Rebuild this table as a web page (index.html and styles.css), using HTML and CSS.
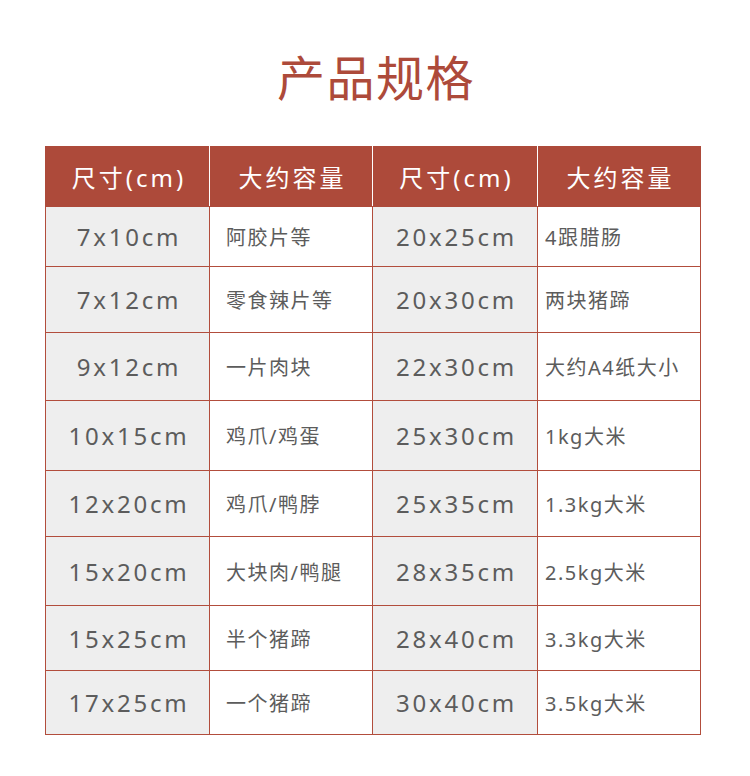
FILE: index.html
```html
<!DOCTYPE html>
<html lang="zh-CN">
<head>
<meta charset="utf-8">
<title>产品规格</title>
<link rel="stylesheet" href="styles.css">
</head>
<body>
<h1 class="title">产品规格</h1>
<table class="spec">
  <thead>
    <tr>
      <th>尺寸(cm)</th><th>大约容量</th><th>尺寸(cm)</th><th>大约容量</th>
    </tr>
  </thead>
  <tbody>
    <tr><td class="size">7x10cm</td><td class="cap cap-a">阿胶片等</td><td class="size">20x25cm</td><td class="cap cap-b">4跟腊肠</td></tr>
    <tr><td class="size">7x12cm</td><td class="cap cap-a">零食辣片等</td><td class="size">20x30cm</td><td class="cap cap-b">两块猪蹄</td></tr>
    <tr><td class="size">9x12cm</td><td class="cap cap-a">一片肉块</td><td class="size">22x30cm</td><td class="cap cap-b">大约A4纸大小</td></tr>
    <tr><td class="size">10x15cm</td><td class="cap cap-a">鸡爪/鸡蛋</td><td class="size">25x30cm</td><td class="cap cap-b">1kg大米</td></tr>
    <tr><td class="size">12x20cm</td><td class="cap cap-a">鸡爪/鸭脖</td><td class="size">25x35cm</td><td class="cap cap-b">1.3kg大米</td></tr>
    <tr><td class="size">15x20cm</td><td class="cap cap-a">大块肉/鸭腿</td><td class="size">28x35cm</td><td class="cap cap-b">2.5kg大米</td></tr>
    <tr><td class="size">15x25cm</td><td class="cap cap-a">半个猪蹄</td><td class="size">28x40cm</td><td class="cap cap-b">3.3kg大米</td></tr>
    <tr><td class="size">17x25cm</td><td class="cap cap-a">一个猪蹄</td><td class="size">30x40cm</td><td class="cap cap-b">3.5kg大米</td></tr>
  </tbody>
</table>
</body>
</html>
```
FILE: styles.css
```css
html, body {
  margin: 0;
  padding: 0;
  background: #ffffff;
}
body {
  font-family: "Noto Sans", "Noto Sans CJK SC", sans-serif;
  color: #5a5a5a;
}
.title {
  margin: 0;
  padding-top: 45px;
  padding-left: 2px;
  height: 146px;
  box-sizing: border-box;
  text-align: center;
  font-family: "Noto Sans CJK SC", sans-serif;
  font-weight: 400;
  font-size: 48px;
  letter-spacing: 1.5px;
  line-height: 60px;
  color: #ad4a3a;
}
.spec {
  margin-left: 45px;
  width: 655px;
  border-collapse: collapse;
  table-layout: fixed;
}
.spec th:nth-child(1) { width: 160px; }
.spec th:nth-child(2) { width: 159px; }
.spec th:nth-child(3) { width: 161px; }
.spec th:nth-child(4) { width: 159px; }
.spec th {
  height: 59px;
  padding: 0 0 0 3px;
  background: #ad4a3a;
  color: #ffffff;
  font-family: "Noto Sans", "Noto Sans CJK SC", sans-serif;
  font-weight: 400;
  font-size: 24px;
  letter-spacing: 3px;
  text-align: center;
  border: 1px solid #ad4a3a;
}
.spec th:not(:last-child) {
  border-right: 1px solid #ffffff;
}
.spec td {
  padding: 0;
  border: 1px solid #b24d3c;
  vertical-align: middle;
}
.spec tbody tr:nth-child(1) td { height: 59px; }
.spec tbody tr:nth-child(2) td { height: 65px; }
.spec tbody tr:nth-child(3) td { height: 67px; }
.spec tbody tr:nth-child(4) td { height: 69px; }
.spec tbody tr:nth-child(5) td { height: 65px; }
.spec tbody tr:nth-child(6) td { height: 68px; }
.spec tbody tr:nth-child(7) td { height: 64px; }
.spec tbody tr:nth-child(8) td { height: 63px; }
.spec td.size {
  padding-left: 3px;
  background: #eeeeee;
  text-align: center;
  font-size: 24px;
  letter-spacing: 2.8px;
  color: #5c5c5c;
}
.cap {
  background: #ffffff;
  text-align: left;
  font-size: 20px;
  letter-spacing: 1.5px;
  color: #5c5c5c;
  white-space: nowrap;
}
.spec td.cap-a { padding-left: 16px; }
.spec td.cap-b { padding-left: 7px; }
```
